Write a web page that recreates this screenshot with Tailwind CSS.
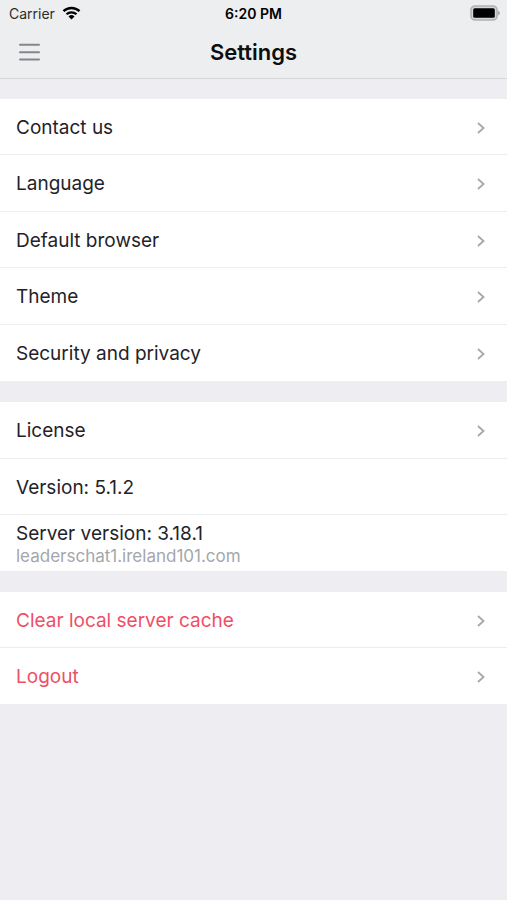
<!DOCTYPE html>
<html lang="en">
<head>
<meta charset="utf-8">
<meta name="viewport" content="width=device-width, initial-scale=1">
<title>Settings</title>
<script src="https://cdn.jsdelivr.net/npm/@tailwindcss/browser@4"></script>
</head>
<body class="min-h-screen bg-[#eeeef2] font-['Inter',sans-serif] text-[#1f2329]">
<svg class="hidden" aria-hidden="true">
  <symbol id="chevron" viewBox="0 0 10 14"><path d="M2 2l5.5 5L2 12" fill="none" stroke="currentColor" stroke-width="1.8" stroke-linejoin="miter"/></symbol>
</svg>

<header class="border-b border-[#d4d6d9] bg-[#edeef0]">
  <div class="grid h-[26px] grid-cols-3 items-center">
    <div class="flex items-center gap-[7px] pl-[9px] text-[14px] text-[#2b2c2e]">
      <span>Carrier</span>
      <svg class="h-[14px] w-[19px]" viewBox="0 0 18 14" aria-label="Wi-Fi" role="img">
        <path d="M1 5.2a11.5 11.5 0 0 1 16 0" fill="none" stroke="#000" stroke-width="2.4"/>
        <path d="M4 8.3a7.2 7.2 0 0 1 10 0" fill="none" stroke="#000" stroke-width="2.2"/>
        <path d="M6 10.5a4.3 4.3 0 0 1 6 0L9 13.6z" fill="#000"/>
      </svg>
    </div>
    <span class="text-center text-[14px] font-semibold text-black">6:20 PM</span>
    <svg class="mr-[6px] h-4 w-[31px] justify-self-end" viewBox="0 0 31 16" aria-label="Battery full" role="img">
      <rect x="1" y="1" width="26" height="14" rx="4" fill="#d4d5d6" stroke="#b0b1b2" stroke-width="1.6"/>
      <rect x="3.2" y="3.2" width="21.6" height="9.6" rx="1.5" fill="#000"/>
      <path d="M28 5.5q4 2.5 0 5z" fill="#aaabac"/>
    </svg>
  </div>
  <div class="grid h-[52px] grid-cols-[60px_1fr_60px] items-center">
    <button type="button" aria-label="Open menu" class="flex h-full items-center pl-[19px]">
      <svg class="h-5 w-[21px]" viewBox="0 0 21 20" fill="none" stroke="#85868c" stroke-width="2" stroke-linecap="round"><path d="M1 2.8h19M1 10.2h19M1 17.6h19"/></svg>
    </button>
    <h1 class="text-center text-[22px] leading-7 font-semibold text-[#0d0e12]">Settings</h1>
  </div>
</header>

<main class="flex flex-col gap-[21px] pt-5 text-[19px] leading-6">
  <section class="divide-y divide-[#ededef] bg-white">
    <button type="button" class="flex h-14 w-full items-center justify-between pt-0.5 pr-[21px] pl-4 text-left">Contact us<svg class="h-[14px] w-[10px] text-[#a6a8ac]"><use href="#chevron"/></svg></button>
    <button type="button" class="flex h-[57px] w-full items-center justify-between pt-0.5 pr-[21px] pl-4 text-left">Language<svg class="h-[14px] w-[10px] text-[#a6a8ac]"><use href="#chevron"/></svg></button>
    <button type="button" class="flex h-14 w-full items-center justify-between pt-0.5 pr-[21px] pl-4 text-left">Default browser<svg class="h-[14px] w-[10px] text-[#a6a8ac]"><use href="#chevron"/></svg></button>
    <button type="button" class="flex h-[57px] w-full items-center justify-between pt-0.5 pr-[21px] pl-4 text-left">Theme<svg class="h-[14px] w-[10px] text-[#a6a8ac]"><use href="#chevron"/></svg></button>
    <button type="button" class="flex h-14 w-full items-center justify-between pt-0.5 pr-[21px] pl-4 text-left">Security and privacy<svg class="h-[14px] w-[10px] text-[#a6a8ac]"><use href="#chevron"/></svg></button>
  </section>

  <section class="divide-y divide-[#ededef] bg-white">
    <button type="button" class="flex h-[57px] w-full items-center justify-between pt-0.5 pr-[21px] pl-4 text-left">License<svg class="h-[14px] w-[10px] text-[#a6a8ac]"><use href="#chevron"/></svg></button>
    <div class="flex h-14 items-center px-4 pt-0.5">Version: 5.1.2</div>
    <div class="flex h-14 flex-col justify-center px-4 pt-0.5">
      <p>Server version: 3.18.1</p>
      <p class="text-[17px] leading-5 text-[#a3a7ac]">leaderschat1.ireland101.com</p>
    </div>
  </section>

  <section class="divide-y divide-[#ededef] bg-white text-[#ee4f66]">
    <button type="button" class="flex h-14 w-full items-center justify-between pt-0.5 pr-[21px] pl-4 text-left">Clear local server cache<svg class="h-[14px] w-[10px] text-[#a6a8ac]"><use href="#chevron"/></svg></button>
    <button type="button" class="flex h-14 w-full items-center justify-between pt-0.5 pr-[21px] pl-4 text-left">Logout<svg class="h-[14px] w-[10px] text-[#a6a8ac]"><use href="#chevron"/></svg></button>
  </section>
</main>
</body>
</html>
